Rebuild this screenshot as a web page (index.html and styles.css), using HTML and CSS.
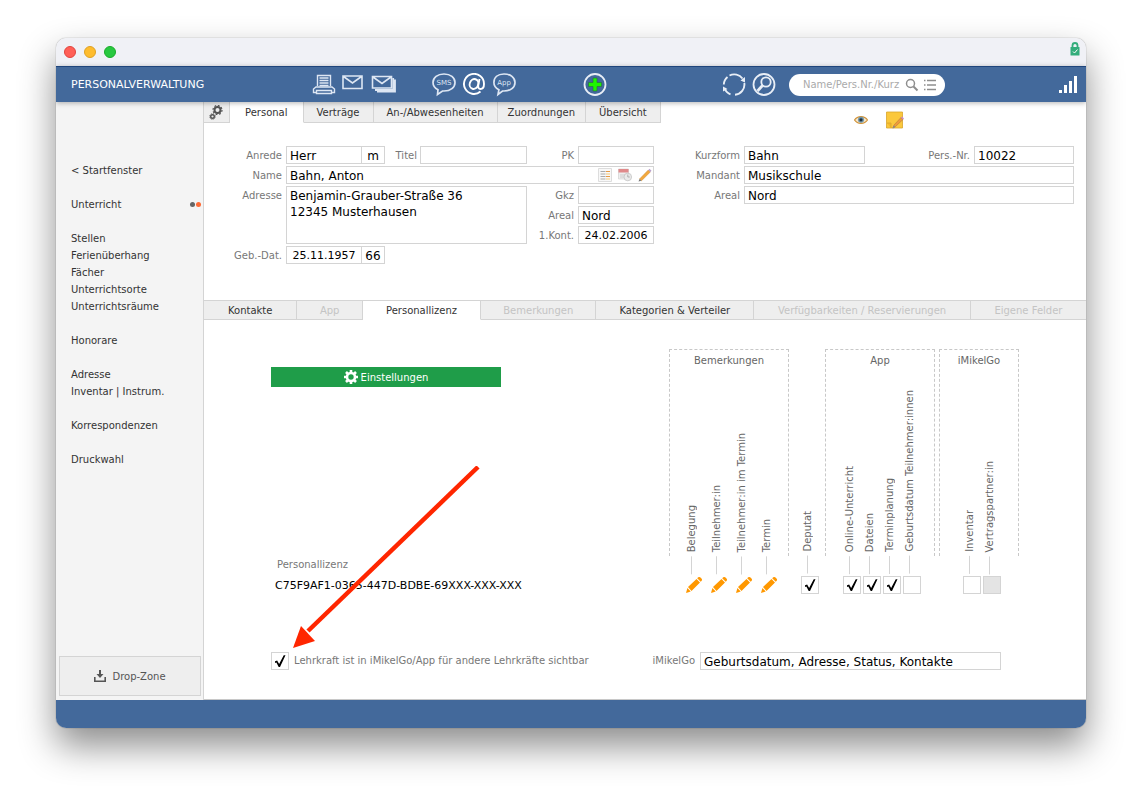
FILE: index.html
```html
<!DOCTYPE html>
<html lang="de">
<head>
    <meta charset="UTF-8">
    <meta name="viewport" content="width=device-width, initial-scale=1.0">
    <title>Personalverwaltung</title>
    <link rel="stylesheet" href="styles.css">
</head>
<body>
    <div class="window">
        <div class="titlebar">
            <span class="dot red"></span>
            <span class="dot yellow"></span>
            <span class="dot green"></span>
            <svg class="lock" width="10" height="14" viewBox="0 0 10 14">
                <path d="M2.500 6V3.500a2.500 2.500 0 0 1 5 0V6" fill="none" stroke="#33ad7b" stroke-width="1.800"/>
                <rect x="0.500" y="5" width="9" height="8.500" rx="0.500" fill="#33ad7b"/>
                <path d="M3 9.500l1.500 1.500 3-3.500" fill="none" stroke="#fff" stroke-width="1"/>
            </svg>
        </div>

        <header class="toolbar">
            <h1>PERSONALVERWALTUNG</h1>
            <div class="tools tools-print">
                <button aria-label="Drucken">
                    <svg width="24" height="24" viewBox="0 0 24 24" fill="none" stroke="#dde6f3" stroke-width="1.400">
                        <path d="M5.500 13V2.500h13V13M7.500 5h9M7.500 7.500h9M7.500 10h9M7.500 12.500h9"/>
                        <path d="M4 14h16l2.500 2v3.500h-21V16z"/>
                        <path d="M4.500 17.500h15v3h-15z" fill="#43699b"/>
                    </svg>
                </button>
                <button aria-label="Mail">
                    <svg width="22" height="24" viewBox="0 0 22 24" fill="none" stroke="#dde6f3" stroke-width="1.600">
                        <path d="M1 3h19v12.500H1zM1.500 3.500l9 6.500 9-6.500"/>
                    </svg>
                </button>
                <button aria-label="Serienmail">
                    <svg width="26" height="24" viewBox="0 0 26 24" fill="none" stroke="#dde6f3" stroke-width="1.600">
                        <path d="M2.500 3.500h19V15h-19zM3 4l9 6.500L21 4"/>
                        <path d="M23.200 5v12H5M25 6.500v12H7" stroke-width="1.800"/>
                    </svg>
                </button>
            </div>
            <div class="tools tools-send">
                <button aria-label="SMS">
                    <svg width="26" height="24" viewBox="0 0 26 24">
                        <path d="M13 1C6.500 1 2 4.500 2 9.500c0 3.500 2 5.700 5 7.200L6.500 21.500 11.500 18H13c6.500 0 11-3.500 11-8.500S19.500 1 13 1z" fill="none" stroke="#dde6f3" stroke-width="1.700"/>
                        <text x="13" y="12" text-anchor="middle" class="bubble-text">SMS</text>
                    </svg>
                </button>
                <button aria-label="E-Mail-Adresse">
                    <svg width="24" height="24" viewBox="0 0 24 24" fill="none" stroke="#fff" stroke-width="1.900">
                        <path d="M17.500 18.500A10 10 0 1 1 21 11c0 3-1.500 5-3.500 5S15 14.500 15.300 12L16.500 6"/>
                        <ellipse cx="11" cy="11" rx="4.300" ry="5" transform="rotate(18 11 11)"/>
                    </svg>
                </button>
                <button aria-label="App">
                    <svg width="26" height="24" viewBox="0 0 26 24">
                        <path d="M11 1C4.500 1 0.900 4.500 0.900 9.500c0 3.500 2 5.700 5 7.200L5 21.500 9.500 18H11c6.500 0 11-3.500 11-8.500S17.500 1 11 1z" fill="none" stroke="#dde6f3" stroke-width="1.700"/>
                        <text x="11" y="12" text-anchor="middle" class="bubble-text">App</text>
                    </svg>
                </button>
            </div>
            <div class="tools tools-add">
                <button aria-label="Neu">
                    <svg width="24" height="24" viewBox="0 0 24 24">
                        <circle cx="12" cy="11.500" r="10.500" fill="none" stroke="#e8eef6" stroke-width="1.800"/>
                        <path d="M10 5h4v4.500h4.500v4H14V18h-4v-4.500H5.500v-4H10z" fill="#1df500" stroke="#2a6a3f" stroke-width="0.600"/>
                    </svg>
                </button>
            </div>
            <div class="tools tools-find">
                <button aria-label="Aktualisieren">
                    <svg width="24" height="24" viewBox="0 0 24 24" fill="none" stroke="#e8eef6" stroke-width="1.900">
                        <path d="M7.500 2.500A10.300 10.300 0 0 1 20.500 5.500M22.300 10A10.300 10.300 0 0 1 13 21.800M8.500 21.300A10.300 10.300 0 0 1 2.500 15M1.800 11.500A10.300 10.300 0 0 1 5.500 4"/>
                        <path d="M18.500 7.500l4.500 2V4zM1 13.500v5l4.500-2.500z" fill="#e8eef6" stroke="none"/>
                    </svg>
                </button>
                <button aria-label="Suchen">
                    <svg width="24" height="24" viewBox="0 0 24 24" fill="none" stroke="#e8eef6">
                        <circle cx="12" cy="11.500" r="10.500" stroke-width="1.800"/>
                        <circle cx="14" cy="9" r="4.700" stroke-width="1.800"/>
                        <path d="M10.500 12.500L5.500 18" stroke-width="2.800"/>
                    </svg>
                </button>
            </div>
            <div class="search">
                <input type="text" placeholder="Name/Pers.Nr./Kurz" aria-label="Suche">
                <svg width="32" height="14" viewBox="0 0 32 14" fill="none" stroke="#8e8e8e">
                    <circle cx="5.500" cy="5.500" r="4" stroke-width="1.500"/>
                    <path d="M8.500 8.500l4 4" stroke-width="2"/>
                    <path d="M22 2.500h9M22 7h9M22 11.500h9M19 2.500h1.500M19 7h1.500M19 11.500h1.500" stroke-width="1.500"/>
                </svg>
            </div>
            <svg class="signal" width="20" height="20" viewBox="0 0 20 20" fill="#fff">
                <path d="M1 15h3v3H1zM6 10h3v8H6zM11 6h3v12h-3zM16 1h3v17h-3z"/>
            </svg>
        </header>

        <div class="content">
            <aside class="sidebar">
                <nav>
                    <ul><li><a href="#">&lt; Startfenster</a></li></ul>
                    <ul><li class="marked"><a href="#">Unterricht</a><span class="marks"><i></i><i class="orange"></i></span></li></ul>
                    <ul>
                        <li><a href="#">Stellen</a></li>
                        <li><a href="#">Ferienüberhang</a></li>
                        <li><a href="#">Fächer</a></li>
                        <li><a href="#">Unterrichtsorte</a></li>
                        <li><a href="#">Unterrichtsräume</a></li>
                    </ul>
                    <ul><li><a href="#">Honorare</a></li></ul>
                    <ul>
                        <li><a href="#">Adresse</a></li>
                        <li><a href="#">Inventar | Instrum.</a></li>
                    </ul>
                    <ul><li><a href="#">Korrespondenzen</a></li></ul>
                    <ul><li><a href="#">Druckwahl</a></li></ul>
                </nav>
                <button class="dropzone">
                    <svg width="12" height="12" viewBox="0 0 12 12" fill="#555">
                        <path d="M5 0h2v4h2.500L6 8 2.500 4H5zM0 7h1.600v3.400h8.800V7H12v5H0z"/>
                    </svg>
                    Drop-Zone
                </button>
            </aside>

            <main>
                <div class="main-head">
                    <div class="tabs">
                        <button class="tab tab-gear" aria-label="Optionen">
                            <svg width="14" height="15" viewBox="0 0 14 15" fill="none" stroke="#555">
                                <circle cx="8.500" cy="5" r="3" stroke-width="2"/>
                                <circle cx="8.500" cy="5" r="4.500" stroke-width="1.200" stroke-dasharray="1.800 1.700"/>
                                <circle cx="3.500" cy="11.500" r="1.800" stroke-width="1.400"/>
                                <circle cx="3.500" cy="11.500" r="2.800" stroke-width="0.900" stroke-dasharray="1.200 1"/>
                            </svg>
                        </button>
                        <button class="tab active">Personal</button>
                        <button class="tab">Verträge</button>
                        <button class="tab">An-/Abwesenheiten</button>
                        <button class="tab narrow">Zuordnungen</button>
                        <button class="tab">Übersicht</button>
                    </div>
                    <div class="head-icons">
                        <button aria-label="Ansicht">
                            <svg width="14" height="10" viewBox="0 0 14 10">
                                <path d="M0.500 5C3.500 0.500 10.500 0.500 13.500 5 10.500 9.500 3.500 9.500 0.500 5z" fill="#f3e4c8" stroke="#d09238" stroke-width="1.200"/>
                                <circle cx="7" cy="4.800" r="3" fill="#6f94a8"/>
                                <circle cx="7" cy="4.800" r="1.600" fill="#20303c"/>
                            </svg>
                        </button>
                        <button aria-label="Notiz">
                            <svg width="18" height="18" viewBox="0 0 18 18">
                                <path d="M0.500 1h16v16h-16z" fill="#fbc83c" stroke="#d9a62c" stroke-width="0.800"/>
                                <path d="M1 12h4v5" fill="#f5b92c" stroke="#d9a62c" stroke-width="0.800"/>
                                <path d="M7 17l1-3 7-7.500 2 2-7.500 7z" fill="#f09a3a" stroke="#a97542" stroke-width="0.500"/>
                                <path d="M15 6.500l1-1 2 2-1 1z" fill="#c78bd0"/>
                                <path d="M6.500 17.500l1-3 2 1.500z" fill="#888"/>
                            </svg>
                        </button>
                    </div>
                </div>

                <form class="forms">
                    <div class="person">
                        <label for="anrede">Anrede</label>
                        <div class="inline">
                            <input type="text" id="anrede" class="w-date" value="Herr">
                            <input type="text" class="w-short" value="m" aria-label="Geschlecht">
                            <label for="titel">Titel</label>
                            <input type="text" id="titel" class="w-titel">
                        </div>
                        <label for="pk">PK</label>
                        <input type="text" id="pk">

                        <label for="name">Name</label>
                        <div class="name-field">
                            <input type="text" id="name" value="Bahn, Anton">
                            <div class="name-icons">
                                <button type="button" aria-label="Liste">
                                    <svg width="14" height="14" viewBox="0 0 14 14">
                                        <path d="M0.500 0.500h13v13h-13z" fill="#f8f8f8" stroke="#ddd"/>
                                        <path d="M2.500 3.500h5M2.500 6h5M2.500 8.500h5M2.500 11h5" stroke="#aaa"/>
                                        <path d="M8 3.500h4M8 8.500h4" stroke="#e99a44"/>
                                        <path d="M8 6h4M8 11h4" stroke="#f2c878"/>
                                    </svg>
                                </button>
                                <button type="button" aria-label="Kalender">
                                    <svg width="14" height="14" viewBox="0 0 14 14">
                                        <path d="M0.500 1h10v10h-10z" fill="#eee" stroke="#ccc" stroke-width="0.600"/>
                                        <path d="M0.500 1h10v3.500h-10z" fill="#e08a8b"/>
                                        <path d="M2 7h6M2 9h4" stroke="#ccc"/>
                                        <circle cx="9.800" cy="9" r="3.800" fill="#eaeaea" stroke="#c4c4c4" stroke-width="0.800"/>
                                        <path d="M9.800 6.500V9h2" fill="none" stroke="#999" stroke-width="0.700"/>
                                    </svg>
                                </button>
                                <button type="button" aria-label="Bearbeiten">
                                    <svg width="14" height="14" viewBox="0 0 14 14">
                                        <path d="M1.500 11l8.800-9 2 2-8.800 8.800z" fill="#f3a83c" stroke="#c98a35" stroke-width="0.500"/>
                                        <path d="M10.300 2l1.200-1.300 2 2L12.300 4z" fill="#b9a0cc"/>
                                        <path d="M0.500 13.500l1-2.500 2 1.800z" fill="#777"/>
                                    </svg>
                                </button>
                            </div>
                        </div>

                        <label for="adresse">Adresse</label>
                        <textarea id="adresse">Benjamin-Grauber-Straße 36
12345 Musterhausen</textarea>
                        <label for="gkz" class="side-label">Gkz</label>
                        <input type="text" id="gkz">
                        <label for="areal" class="side-label">Areal</label>
                        <input type="text" id="areal" value="Nord">
                        <label for="kontakt" class="side-label">1.Kont.</label>
                        <input type="text" id="kontakt" class="date" value="24.02.2006">

                        <label for="geburt">Geb.-Dat.</label>
                        <div class="inline">
                            <input type="text" id="geburt" class="w-date date" value="25.11.1957">
                            <input type="text" class="w-short" value="66" aria-label="Alter">
                        </div>
                    </div>

                    <div class="assignment">
                        <label for="kurzform">Kurzform</label>
                        <input type="text" id="kurzform" value="Bahn">
                        <label for="persnr">Pers.-Nr.</label>
                        <input type="text" id="persnr" value="10022">
                        <label for="mandant">Mandant</label>
                        <input type="text" id="mandant" class="wide" value="Musikschule">
                        <label for="areal2">Areal</label>
                        <input type="text" id="areal2" class="wide" value="Nord">
                    </div>
                </form>

                <div class="subtabs">
                    <button class="kontakte">Kontakte</button>
                    <button class="app" disabled>App</button>
                    <button class="lizenz active">Personallizenz</button>
                    <button class="bemerkungen" disabled>Bemerkungen</button>
                    <button class="kategorien">Kategorien &amp; Verteiler</button>
                    <button class="verfuegbar" disabled>Verfügbarkeiten / Reservierungen</button>
                    <button class="felder" disabled>Eigene Felder</button>
                </div>

                <section class="panel">
                    <div class="panel-top">
                        <div class="licence">
                            <button class="settings">
                                <svg width="14" height="14" viewBox="0 0 14 14" fill="none" stroke="#fff">
                                    <circle cx="7" cy="7" r="4" stroke-width="2.600"/>
                                    <path d="M7 0v2.500M7 11.500V14M0 7h2.500M11.500 7H14M2 2l2 2M10 10l2 2M12 2l-2 2M4 10l-2 2" stroke-width="2.600"/>
                                </svg>
                                Einstellungen
                            </button>
                            <div class="licence-key">
                                <label for="lizenz">Personallizenz</label>
                                <input type="text" id="lizenz" value="C75F9AF1-0365-447D-BDBE-69XXX-XXX-XXX" readonly>
                            </div>
                        </div>

                        <div class="rights">
                            <div class="group g-notes">
                                <div class="frame">Bemerkungen</div>
                                <div class="columns">
                                    <div class="right"><label for="r1">Belegung</label><button id="r1" class="pencil"><svg width="18" height="18" viewBox="0 0 18 18"><use href="#pen"/></svg></button></div>
                                    <div class="right"><label for="r2">Teilnehmer:in</label><button id="r2" class="pencil"><svg width="18" height="18" viewBox="0 0 18 18"><use href="#pen"/></svg></button></div>
                                    <div class="right"><label for="r3">Teilnehmer:in im Termin</label><button id="r3" class="pencil"><svg width="18" height="18" viewBox="0 0 18 18"><use href="#pen"/></svg></button></div>
                                    <div class="right"><label for="r4">Termin</label><button id="r4" class="pencil"><svg width="18" height="18" viewBox="0 0 18 18"><use href="#pen"/></svg></button></div>
                                </div>
                            </div>
                            <div class="group g-single">
                                <div class="columns">
                                    <div class="right"><label for="r5">Deputat</label><input type="checkbox" id="r5" checked></div>
                                </div>
                            </div>
                            <div class="group g-app">
                                <div class="frame">App</div>
                                <div class="columns">
                                    <div class="right"><label for="r6">Online-Unterricht</label><input type="checkbox" id="r6" checked></div>
                                    <div class="right"><label for="r7">Dateien</label><input type="checkbox" id="r7" checked></div>
                                    <div class="right"><label for="r8">Terminplanung</label><input type="checkbox" id="r8" checked></div>
                                    <div class="right"><label for="r9">Geburtsdatum Teilnehmer:innen</label><input type="checkbox" id="r9"></div>
                                </div>
                            </div>
                            <div class="group g-go">
                                <div class="frame">iMikelGo</div>
                                <div class="columns">
                                    <div class="right"><label for="r10">Inventar</label><input type="checkbox" id="r10"></div>
                                    <div class="right"><label for="r11">Vertragspartner:in</label><input type="checkbox" id="r11" disabled></div>
                                </div>
                            </div>
                        </div>
                    </div>

                    <div class="panel-bottom">
                        <div class="visible">
                            <input type="checkbox" id="sichtbar" checked>
                            <label for="sichtbar">Lehrkraft ist in iMikelGo/App für andere Lehrkräfte sichtbar</label>
                        </div>
                        <div class="go-data">
                            <label for="godata">iMikelGo</label>
                            <input type="text" id="godata" value="Geburtsdatum, Adresse, Status, Kontakte">
                        </div>
                    </div>

                    <svg class="arrow" width="190" height="184" viewBox="0 0 190 184">
                        <path d="M185 1L15 165" stroke="#ff2600" stroke-width="4.500"/>
                        <path d="M0 182L8 160 22 175z" fill="#ff2600"/>
                    </svg>
                </section>
            </main>
        </div>

        <footer class="statusbar"></footer>
    </div>

    <svg width="0" height="0" class="defs">
        <symbol id="pen" viewBox="0 0 18 18">
            <path d="M3 11l8.500-8 3.500 3.500L6.500 15zM12.200 2.300l1-1q1-.8 2 0l1.500 1.500q.8 1 0 2l-1 1zM2.400 12l3.300 3.500L1 17z" fill="#ff9800"/>
        </symbol>
    </svg>
</body>
</html>
```

FILE: styles.css
```css
* {
    box-sizing: border-box;
}
body {
    margin: 0;
    min-height: 100vh;
    padding: 38px 56px;
    background-color: #fff;
    font-family: "DejaVu Sans", Verdana, sans-serif;
    font-size: 10px;
    color: #333;
}
button, input, textarea {
    font-family: inherit;
    font-size: inherit;
    color: inherit;
    margin: 0;
    padding: 0;
    border: none;
    border-radius: 0;
    background: none;
}
button {
    cursor: pointer;
}
svg {
    display: block;
}
.window {
    border-radius: 10px;
    overflow: hidden;
    box-shadow: 0 0 1px rgba(0, 0, 0, 0.6), 0 18px 36px rgba(0, 0, 0, 0.45);
}

/* title bar */
.titlebar {
    display: flex;
    align-items: center;
    gap: 8px;
    height: 28px;
    padding: 0 6px 0 8px;
    background-color: #f0f1f6;
}
.dot {
    width: 12px;
    height: 12px;
    border-radius: 50%;
    border: 1px solid #e0443e;
    background-color: #ff5f57;
}
.dot.yellow {
    border-color: #dea123;
    background-color: #febc2e;
}
.dot.green {
    border-color: #1aab29;
    background-color: #28c840;
}
.lock {
    margin: 0 0 6px auto;
}

/* toolbar */
.toolbar {
    position: relative;
    z-index: 1;
    display: flex;
    align-items: center;
    height: 36px;
    padding: 0 8px 0 15px;
    border-top: 1px solid #1f457c;
    background-color: #43699b;
    box-shadow: 0 1px 5px rgba(0, 0, 0, 0.3);
}
.toolbar h1 {
    width: 241px;
    margin: 0;
    font-size: 11px;
    font-weight: normal;
    color: #fff;
}
.tools {
    display: flex;
    gap: 6px;
}
.tools-print {
    width: 119px;
}
.tools-send {
    width: 152px;
}
.tools-add {
    width: 139px;
}
.tools-find {
    width: 67px;
}
.bubble-text {
    font-size: 7px;
    fill: #dde6f3;
}
.search {
    display: flex;
    align-items: center;
    width: 156px;
    height: 22px;
    padding: 0 8px 0 14px;
    border-radius: 11px;
    background-color: #fff;
}
.search input {
    flex: 1;
    min-width: 0;
    outline: none;
}
.search input::placeholder {
    color: #aaa;
}
.signal {
    margin-left: auto;
}

/* sidebar */
.content {
    display: flex;
    background-color: #fff;
}
.sidebar {
    display: flex;
    flex-direction: column;
    justify-content: space-between;
    flex: none;
    width: 148px;
    padding: 60px 2px 4px 3px;
    border-right: 1px solid #d4d4d4;
    background-color: #f4f4f4;
}
.sidebar ul {
    list-style: none;
    margin: 0 0 17px;
    padding: 0 0 0 12px;
}
.sidebar li {
    line-height: 17px;
}
.sidebar a {
    color: #333;
    text-decoration: none;
}
.marked {
    display: flex;
    align-items: center;
    justify-content: space-between;
}
.marks {
    display: flex;
    gap: 1px;
}
.marks i {
    width: 5px;
    height: 5px;
    border-radius: 50%;
    background-color: #666;
}
.marks .orange {
    background-color: #ff6a35;
}
.dropzone {
    display: flex;
    align-items: center;
    justify-content: center;
    gap: 6px;
    height: 40px;
    border: 1px solid #d4d4d4;
    background-color: #eee;
    color: #555;
}

/* tabs */
main {
    flex: 1;
    min-width: 0;
    border-bottom: 1px solid #c8c8c8;
}
.main-head {
    display: flex;
    justify-content: space-between;
    align-items: flex-start;
}
.tabs {
    display: flex;
}
.tab {
    height: 21px;
    padding: 0 13px;
    border: solid #d4d4d4;
    border-width: 0 1px 1px 0;
    background-color: #eee;
}
.tab.active {
    padding: 0 15px;
    border-bottom-color: #fff;
    background-color: #fff;
}
.tab.narrow {
    padding: 0 10px;
}
.tab-gear {
    width: 26px;
    padding: 0 5px;
}
.head-icons {
    display: flex;
    align-items: center;
    gap: 18px;
    padding: 9px 182px 0 0;
}

/* forms */
.forms {
    display: flex;
    padding: 17px 12px 36px 0;
}
.forms input, .forms textarea, .go-data input {
    width: 100%;
    height: 18px;
    padding: 1px 3px 0;
    border: 1px solid #d4d4d4;
    background-color: #fff;
    font-size: 12px;
    color: #000;
}
.forms label, .panel label {
    color: #777;
    line-height: 18px;
}
.forms label {
    line-height: 20px;
    text-align: right;
    white-space: nowrap;
}
.person {
    display: grid;
    grid-template-columns: 78px 241px 43px 76px;
    grid-auto-rows: 18px;
    gap: 2px 4px;
}
.inline {
    display: flex;
}
.inline label {
    flex: 1;
    padding-right: 3px;
}
.forms .w-date {
    width: 76px;
}
.forms .w-short {
    width: 24px;
    margin-left: -1px;
    padding: 1px 0 0;
    text-align: center;
}
.forms .w-titel {
    width: 107px;
}
.forms .date {
    padding: 1px 0 0;
    font-size: 11px;
    text-align: center;
}
.name-field {
    display: flex;
    grid-column: 2 / 5;
    border: 1px solid #d4d4d4;
}
.forms .name-field input {
    flex: 1;
    height: 16px;
    border: none;
}
.name-icons {
    display: flex;
    gap: 6px;
    padding: 0 1px;
}
.forms textarea {
    grid-row: 3 / 6;
    grid-column: 2;
    height: 58px;
    line-height: 16px;
    resize: none;
    overflow: hidden;
}
.person .side-label {
    grid-column: 3;
}
.person label[for="adresse"] {
    grid-row: 3 / 6;
    grid-column: 1;
}
.assignment {
    flex: 1;
    display: grid;
    grid-template-columns: 86px 121px 1fr 100px;
    grid-template-rows: 18px 18px 18px;
    gap: 2px 4px;
    align-content: start;
}
.assignment .wide {
    grid-column: 2 / 5;
}

/* second tab row */
.subtabs {
    display: flex;
    height: 20px;
}
.subtabs button {
    flex: 1 1 0;
    border: solid #d4d4d4;
    border-width: 1px 1px 1px 0;
    background-color: #eee;
    white-space: nowrap;
}
.subtabs .kontakte { flex-grow: 93; }
.subtabs .app { flex-grow: 65; }
.subtabs .lizenz { flex-grow: 118; }
.subtabs .bemerkungen { flex-grow: 115; }
.subtabs .kategorien { flex-grow: 158; }
.subtabs .verfuegbar { flex-grow: 217; }
.subtabs .felder {
    flex-grow: 116;
    border-right: none;
}
.subtabs button:disabled {
    color: #c4c4c4;
    cursor: default;
}
.subtabs .active {
    border-bottom-color: #fff;
    background-color: #fff;
}

/* licence panel */
.panel {
    position: relative;
    padding: 29px 67px 29px;
}
.panel-top, .panel-bottom {
    display: flex;
    justify-content: space-between;
}
.panel-bottom {
    margin-top: 58px;
    padding-right: 18px;
}
.licence {
    display: flex;
    flex-direction: column;
    justify-content: space-between;
    width: 280px;
    padding-top: 18px;
}
.settings {
    display: flex;
    align-items: center;
    justify-content: center;
    gap: 3px;
    width: 230px;
    height: 20px;
    background-color: #1f9d49;
    color: #fff;
}
.licence-key {
    display: flex;
    flex-direction: column;
    gap: 2px;
    padding-left: 4px;
}
.licence-key label {
    padding-left: 2px;
}
.licence-key input {
    height: 18px;
    font-size: 11px;
    color: #000;
}
input[type="checkbox"] {
    appearance: none;
    display: grid;
    place-items: center;
    flex: none;
    width: 18px;
    height: 18px;
    border: 1px solid #d4d4d4;
    background-color: #fff;
}
input[type="checkbox"]:checked::before {
    content: "";
    width: 11px;
    height: 12px;
    background-color: #000;
    clip-path: polygon(0 55%, 24% 45%, 42% 74%, 84% 2%, 100% 2%, 50% 100%, 38% 100%, 17% 62%, 4% 66%);
}
input[type="checkbox"]:disabled {
    background-color: #e4e4e4;
}
.visible, .go-data {
    display: flex;
    align-items: center;
    gap: 5px;
}
.go-data input {
    width: 301px;
}

/* rights matrix */
.rights {
    display: flex;
}
.group {
    display: grid;
    grid-template-rows: 207px 38px;
    grid-template-columns: 1fr;
}
.frame {
    grid-area: 1 / 1;
    padding-top: 5px;
    border: 1px dashed #c8c8c8;
    border-bottom: none;
    text-align: center;
    color: #666;
}
.columns {
    grid-area: 1 / 1 / 3 / 2;
    display: flex;
    align-items: flex-end;
}
.g-notes {
    width: 120px;
}
.g-notes .columns {
    padding-left: 12px;
}
.g-single {
    width: 36px;
}
.g-single .columns {
    padding-left: 11px;
}
.g-app {
    width: 110px;
    margin-right: 4px;
}
.g-app .columns {
    padding-left: 17px;
}
.g-go {
    width: 80px;
}
.g-go .columns {
    padding-left: 23px;
}
.right {
    display: flex;
    flex-direction: column;
    align-items: center;
    width: 20px;
}
.g-notes .right {
    width: 25px;
}
.right label {
    writing-mode: vertical-rl;
    transform: rotate(180deg);
    margin-right: 4px;
    line-height: 16px;
    white-space: nowrap;
    color: #666;
}
.right label::before {
    content: "";
    display: inline-block;
    width: 1px;
    height: 18px;
    margin-bottom: 4px;
    background-color: #d4d4d4;
}
.right input, .right .pencil {
    margin-top: 2px;
}

/* pointer from the settings down to the tick box */
.arrow {
    position: absolute;
    top: 146px;
    left: 89px;
    pointer-events: none;
}
.statusbar {
    height: 28px;
    background-color: #43699b;
}
.defs {
    position: absolute;
}
```
